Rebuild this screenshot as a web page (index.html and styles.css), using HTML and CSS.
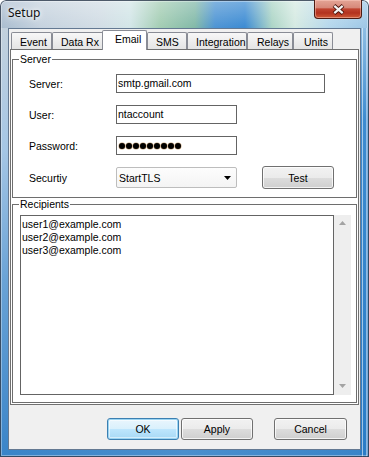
FILE: index.html
```html
<!DOCTYPE html>
<html lang="en">
<head>
    <meta charset="UTF-8">
    <title>Setup</title>
    <link rel="stylesheet" href="styles.css">
</head>
<body>
<div class="window">
    <div class="titlebar">
        <span class="title">Setup</span>
        <div class="close">
            <svg width="13" height="11" viewBox="0 0 13 11">
                <path d="M2 1.5 L11 9.5 M11 1.5 L2 9.5" stroke="#4a1208" stroke-width="4" fill="none"/>
                <path d="M2.3 1.8 L10.7 9.2 M10.7 1.8 L2.3 9.2" stroke="#f4f4f4" stroke-width="2.2" fill="none"/>
            </svg>
        </div>
    </div>

    <div class="client">
        <div class="tabs">
            <span class="tab tab-event">Event</span>
            <span class="tab tab-datarx">Data Rx</span>
            <span class="tab tab-email selected">Email</span>
            <span class="tab tab-sms">SMS</span>
            <span class="tab tab-integration">Integration</span>
            <span class="tab tab-relays">Relays</span>
            <span class="tab tab-units">Units</span>
        </div>

        <div class="pane">
            <fieldset class="group server">
                <legend>Server</legend>
                <div class="form">
                    <span class="label">Server:</span>
                    <div class="edit wide">smtp.gmail.com</div>

                    <span class="label">User:</span>
                    <div class="edit">ntaccount</div>

                    <span class="label">Password:</span>
                    <div class="edit password">
                        <i></i><i></i><i></i><i></i><i></i><i></i><i></i><i></i><i></i>
                    </div>

                    <span class="label">Securtiy</span>
                    <div class="combo">
                        <span>StartTLS</span>
                        <svg width="7" height="4" viewBox="0 0 7 4"><path d="M0 0 H7 L3.5 4 Z" fill="#000"/></svg>
                    </div>
                    <button class="btn test">Test</button>
                </div>
            </fieldset>

            <fieldset class="group recipients">
                <legend>Recipients</legend>
                <div class="listwrap">
                    <div class="memo">user1@example.com<br>user2@example.com<br>user3@example.com</div>
                    <div class="vscroll">
                        <svg width="7" height="4" viewBox="0 0 7 4"><path d="M0 4 H7 L3.5 0 Z" fill="#a3a3a3"/></svg>
                        <svg width="7" height="4" viewBox="0 0 7 4"><path d="M0 0 H7 L3.5 4 Z" fill="#a3a3a3"/></svg>
                    </div>
                </div>
            </fieldset>
        </div>

        <div class="buttons">
            <button class="btn default">OK</button>
            <button class="btn apply">Apply</button>
            <button class="btn cancel">Cancel</button>
        </div>
    </div>
</div>
</body>
</html>
```

FILE: styles.css
```css
* {
    box-sizing: border-box;
}

body {
    margin: 0;
    background-color: #fff;
    color: #000;
    font-family: "Liberation Sans", Arial, sans-serif;
    font-size: 10.5px;
}

/* window frame (aero glass) */

.window {
    width: 369px;
    height: 457px;
    padding: 0 8px 7px 8px;
    border-radius: 6px 6px 0 0;
    box-shadow: inset 0 0 0 1px rgba(25, 40, 60, .75), inset 0 0 0 2px rgba(255, 255, 255, .35);
    background:
        linear-gradient(to bottom, rgba(255, 255, 255, .3), rgba(255, 255, 255, 0) 28px) top / 100% 28px no-repeat,
        linear-gradient(to right, #a9bccf 0, #c5d2de 40px, #d2dde5 100px, #d3e6e8 130px, #a3cdb3 160px,
            #82b9a8 195px, #4d94d4 215px, #3c8bd3 245px, #acd5c6 272px, #d5eae2 295px, #b5d7ec 330px, #9cc6e6 369px) top / 100% 28px no-repeat,
        linear-gradient(to right, transparent 1px, rgba(255, 255, 255, .55) 1px, rgba(255, 255, 255, .55) 2px, transparent 2px,
            transparent 5px, rgba(255, 255, 255, .45) 5px, rgba(255, 255, 255, .45) 6px, transparent 6px) right 0 top 28px / 8px calc(100% - 28px) no-repeat,
        linear-gradient(to bottom, #c3d1dd 28px, #a5c6e5 150px, #6aa3d6 280px, #3a84c8 100%) left / 9px 100% no-repeat,
        linear-gradient(to bottom, #8ebde3 28px, #3d8bd0 120px, #2a7cc6 100%) right / 9px 100% no-repeat,
        linear-gradient(to right, #3a84c8, #4a8fcd 50%, #3a84c8);
}

.titlebar {
    display: flex;
    justify-content: space-between;
    align-items: flex-start;
    height: 28px;
}

.title {
    font-family: "Noto Sans", "Open Sans", sans-serif;
    font-size: 12px;
    line-height: 16px;
    padding-top: 5px;
    color: #111;
    text-shadow: 0 0 4px #fff, 0 0 8px #fff;
}

.close {
    width: 48px;
    height: 19px;
    margin-right: -1px;
    display: flex;
    align-items: center;
    justify-content: center;
    border: 1px solid #4d1a12;
    border-top: none;
    border-radius: 0 0 4px 4px;
    background: linear-gradient(to bottom, #e4a596 0, #d7897a 42%, #c04430 50%, #b3321f 72%, #cf5a36 100%);
    box-shadow: inset 0 0 0 1px rgba(255, 210, 200, .45);
}

.close svg {
    display: block;
}

/* client area */

.client {
    height: 422px;
    padding-top: 1px;
    border: 1px solid rgba(40, 70, 105, .7);
    background-color: #f0f0f0;
}

.tabs {
    display: flex;
    align-items: flex-end;
    padding-left: 2px;
}

.tab {
    height: 17px;
    padding: 3px 0 0 8px;
    line-height: 13px;
    white-space: nowrap;
    overflow: hidden;
    border: 1px solid #898c95;
    border-bottom: none;
    border-radius: 2px 2px 0 0;
    background: linear-gradient(to bottom, #f7f7f7, #e4e4e4);
}

.tab.selected {
    position: relative;
    z-index: 1;
    height: 20px;
    margin-bottom: -1px;
    padding-top: 2px;
    padding-left: 12px;
    background: #fff;
}

.tab-event { width: 41px; }
.tab-datarx { width: 54px; }
.tab-email { width: 45px; margin-left: -4px; }
.tab-sms { width: 40px; }
.tab-integration { width: 60px; }
.tab-relays { width: 46px; padding-left: 9px; }
.tab-units { width: 40px; padding-left: 10px; }

.pane {
    height: 356px;
    margin: 0 1px;
    padding: 0 1px 1px 1px;
    border: 1px solid #707070;
    background-color: #fff;
}

/* group boxes */

.group {
    margin: 0;
    min-inline-size: 0;
    border: 1px solid #6e6e6e;
}

.group legend {
    margin-left: -1px;
    padding: 0 1px;
    line-height: 13px;
}

.server {
    margin-top: 3px;
    padding: 8px 0 8px 7px;
}

.form {
    display: grid;
    grid-template-columns: 87px 121px 25px 72px;
    grid-template-rows: 19px 19px 19px 22px;
    row-gap: 12px;
    align-items: center;
    padding-left: 9px;
}

.label {
    grid-column: 1;
    white-space: nowrap;
}

.edit {
    grid-column: 2;
    height: 19px;
    padding-left: 1px;
    line-height: 17px;
    border: 1px solid #646464;
    background-color: #fff;
    white-space: nowrap;
}

.edit.wide {
    grid-column: 2 / 5;
    width: 209px;
}

.password {
    display: flex;
    align-items: center;
    padding-left: 2px;
}

.password i {
    width: 6px;
    height: 6px;
    margin-right: 1px;
    border-radius: 50%;
    background-color: #000;
    box-shadow: 0 0 0 .5px rgba(150, 80, 0, .55);
}

.combo {
    grid-column: 2;
    align-self: start;
    height: 21px;
    display: flex;
    align-items: center;
    justify-content: space-between;
    padding: 0 5px 0 2px;
    border: 1px solid #bdbdbd;
    border-radius: 2px;
    background: linear-gradient(to bottom, #fdfdfd, #f4f4f4);
}

.combo svg {
    display: block;
}

/* buttons */

.btn {
    width: 72px;
    height: 22px;
    padding: 0;
    font-family: "Liberation Sans", Arial, sans-serif;
    font-size: 10.5px;
    color: #000;
    border: 1px solid #707070;
    border-radius: 3px;
    background: linear-gradient(to bottom, #f2f2f2 0, #ebebeb 50%, #dddddd 50%, #cfcfcf 100%);
    box-shadow: inset 0 0 0 1px rgba(255, 255, 255, .75);
}

.btn.test {
    grid-column: 4;
    align-self: start;
    height: 23px;
    margin-top: -1px;
}

.btn.default {
    border-color: #3c7fb1;
    background: linear-gradient(to bottom, #eaf6fd 0, #d9f0fc 50%, #bee6fd 50%, #a7d9f5 100%);
    box-shadow: inset 0 0 0 1px #9ad4f2, inset 0 0 0 2px rgba(255, 255, 255, .5);
}

.buttons {
    display: flex;
    margin-top: 13px;
    padding-left: 98px;
}

.btn.apply {
    margin-left: 2px;
}

.btn.cancel {
    width: 73px;
    margin-left: 21px;
}

/* recipients */

.recipients {
    padding: 4px 5px 7px 7px;
}

.listwrap {
    display: flex;
    height: 180px;
}

.memo {
    flex: 1;
    padding: 2px 1px;
    line-height: 13px;
    border: 1px solid #646464;
    background-color: #fff;
}

.vscroll {
    width: 17px;
    display: flex;
    flex-direction: column;
    justify-content: space-between;
    align-items: center;
    padding: 6px 0 7px 0;
    background-color: #eeeeee;
}

.vscroll svg {
    display: block;
}
```
